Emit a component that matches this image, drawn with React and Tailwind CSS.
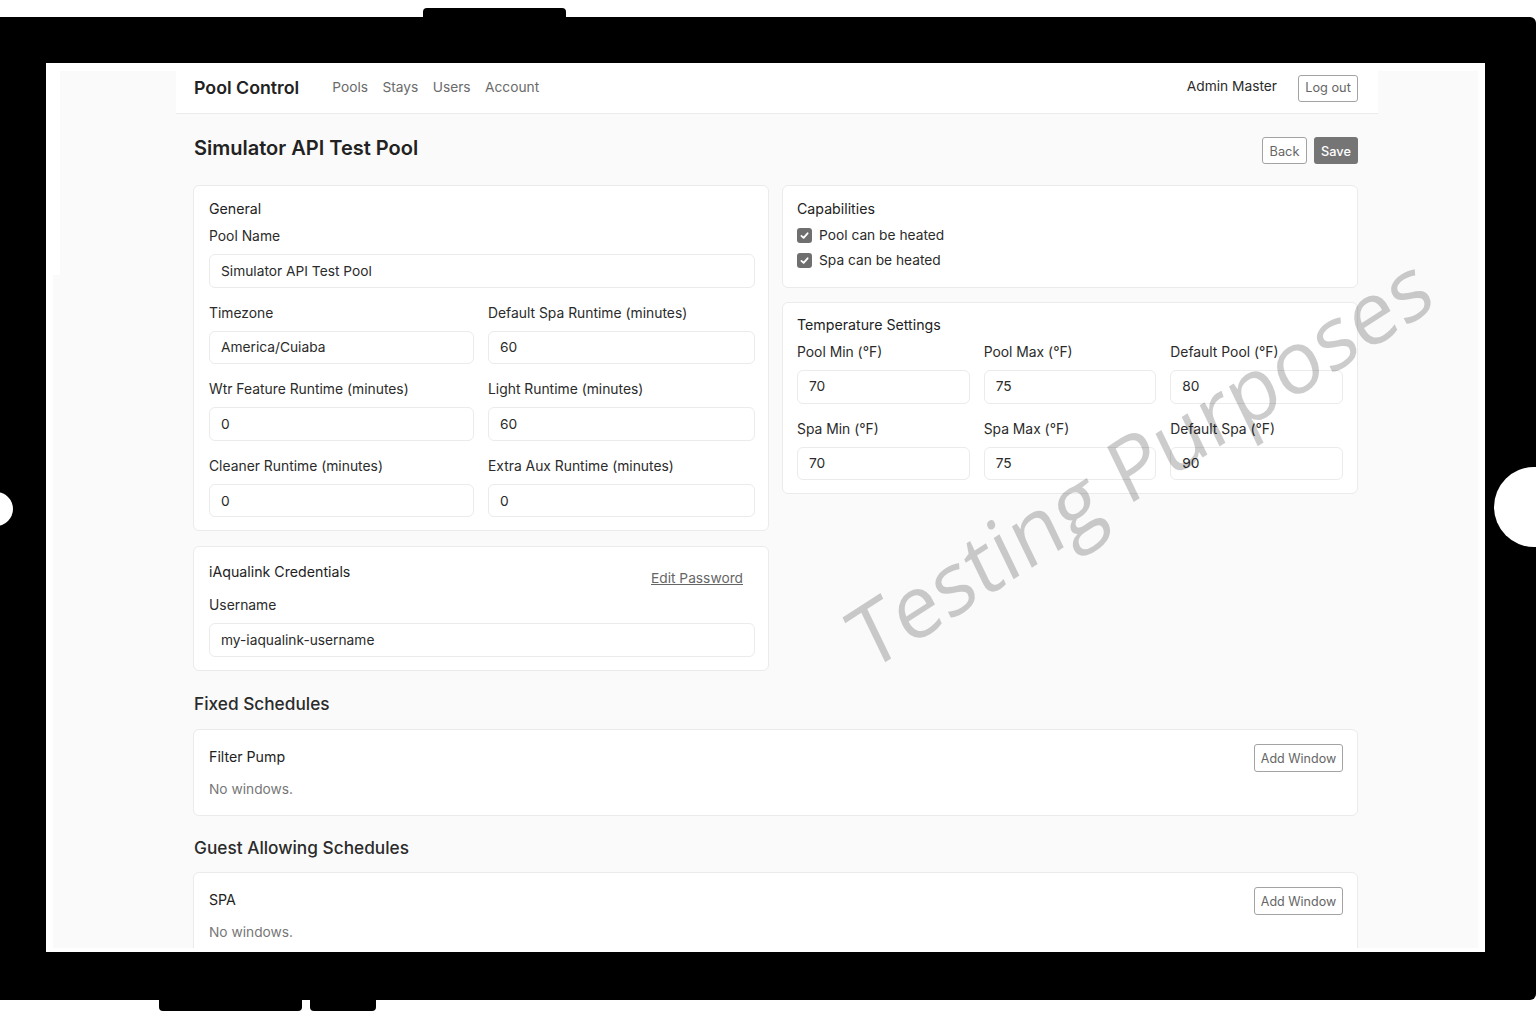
const font = { fontFamily: '"Inter", "Liberation Sans", sans-serif' };

function Label({ children }) {
  return <div className="h-[21px] text-[13.875px] leading-[22px] mb-2 text-[#2b2b2b]">{children}</div>;
}

function Field({ label, value, leading = "leading-[32px]" }) {
  return (
    <div>
      <Label>{label}</Label>
      <div className={"h-[33.5px] rounded-md border border-[#ebebeb] bg-white px-[11px] text-[13.75px] text-[#2b2b2b] " + leading}>{value}</div>
    </div>
  );
}

function Card({ children, className = "" }) {
  return <div className={"rounded-md border border-[#ebebeb] bg-white " + className}>{children}</div>;
}

function Btn({ children, className = "" }) {
  return (
    <div className={"flex items-center justify-center rounded-[3px] border border-[#a3a3a3] bg-white text-[#666666] " + className}>
      {children}
    </div>
  );
}

function CardTitle({ children, className = "" }) {
  return <div className={"-translate-y-px text-[14.2px] leading-[21px] text-[#222222] " + className}>{children}</div>;
}

function Check({ label }) {
  return (
    <div className="flex h-[25px] items-center gap-[7px] text-[13.75px] text-[#2b2b2b]">
      <span className="flex h-[15px] w-[15px] items-center justify-center rounded-[3px] bg-[#6f6f6f]">
        <svg width="11" height="11" viewBox="0 0 16 16" fill="none" stroke="#fff" strokeWidth="2.6" strokeLinecap="round" strokeLinejoin="round">
          <path d="M3.5 8.5 6.7 11.5 12.5 4.8" />
        </svg>
      </span>
      {label}
    </div>
  );
}

function ScheduleCard({ title, className = "" }) {
  return (
    <Card className={"h-[87px] pl-[15px] pr-[14px] pt-[14px] " + className}>
      <div className="flex items-start justify-between">
        <div className="pt-[2px] text-[14.2px] leading-[21px] text-[#222222]">{title}</div>
        <Btn className="h-[28px] w-[89px] pt-[2px] text-[12.5px]">Add Window</Btn>
      </div>
      <div className="mt-[7px] text-[13.75px] leading-[21px] text-[#777777]">No windows.</div>
    </Card>
  );
}

export default function App() {
  const tight = "leading-[31.5px]";
  return (
    <div style={font} className="relative h-[1024px] w-full overflow-hidden bg-white">
      <div className="ml-[423px] mt-2 h-[9px] w-[143px] rounded-t-[4px] bg-black" />
      <div className="h-[983px] rounded-r-[6px] bg-black px-[46px] pt-[46px]">
        <div className="relative h-[889px] w-[1439px] overflow-hidden bg-white">
          <div className="relative h-[885px] overflow-hidden">
            <div className="absolute bottom-0 left-[14px] right-[7px] top-2 bg-[#fafafa]" />
            <div className="absolute bottom-0 left-[7px] top-[212px] w-[7px] bg-[#fafafa]" />
            <div className="relative ml-[130px] w-[1202px]">
              <div className="flex h-[51px] items-center border-b border-[#ebebeb] bg-white pl-[18px] pr-[20px]">
                <div className="text-[17.75px] font-semibold text-[#222222]">Pool Control</div>
                <div className="ml-[33px] flex -translate-y-px gap-[14.4px] text-[13.75px] text-[#6b6b6b]">
                  <span>Pools</span><span>Stays</span><span>Users</span><span>Account</span>
                </div>
                <div className="ml-auto -translate-y-[2px] text-[13.75px] text-[#2b2b2b]">Admin Master</div>
                <Btn className="ml-[21px] h-[27px] w-[60px] text-[12.75px]">Log out</Btn>
              </div>
              <div className="pl-[17px] pr-[20px]">
                <div className="flex items-start justify-between pt-[23px]">
                  <div className="-mt-[1px] pl-px text-[20px] font-semibold leading-[24px] text-[#222222]">Simulator API Test Pool</div>
                  <div className="flex gap-[7px]">
                    <Btn className="h-[27px] w-[45px] pt-[2px] text-[12.75px]">Back</Btn>
                    <div className="flex h-[27px] w-[44px] items-center justify-center rounded-[3px] bg-[#757575] pt-[2px] text-[12.75px] font-medium text-white">Save</div>
                  </div>
                </div>
                <div className="mt-[21px] grid grid-cols-2 gap-x-[13px]">
                  <div className="flex flex-col gap-[15px]">
                    <Card className="h-[346px] pl-[15px] pr-[13px] pt-[13px]">
                      <CardTitle className="mb-[5px]">General</CardTitle>
                      <Field label="Pool Name" value="Simulator API Test Pool" />
                      <div className="mt-[14px] grid grid-cols-[265px_1fr] gap-x-[14px] gap-y-[14px]">
                        <Field label="Timezone" value="America/Cuiaba" leading={tight} />
                        <Field label="Default Spa Runtime (minutes)" value="60" leading={tight} />
                        <Field label="Wtr Feature Runtime (minutes)" value="0" />
                        <Field label="Light Runtime (minutes)" value="60" />
                        <Field label="Cleaner Runtime (minutes)" value="0" />
                        <Field label="Extra Aux Runtime (minutes)" value="0" />
                      </div>
                    </Card>
                    <Card className="h-[125px] pl-[15px] pr-[13px] pt-[15px]">
                      <div className="flex items-start justify-between pr-[12px]">
                        <CardTitle>iAqualink Credentials</CardTitle>
                        <div className="mt-[6px] text-[13.75px] leading-[21px] text-[#666666] underline">Edit Password</div>
                      </div>
                      <div className="mt-[5px]">
                        <Field label="Username" value="my-iaqualink-username" />
                      </div>
                    </Card>
                  </div>
                  <div className="flex flex-col items-stretch gap-[14px]">
                    <Card className="h-[103px] px-[14px] pt-[13px]">
                      <CardTitle className="mb-[3px]">Capabilities</CardTitle>
                      <Check label="Pool can be heated" />
                      <Check label="Spa can be heated" />
                    </Card>
                    <Card className="h-[192px] px-[14px] pt-[12px]">
                      <CardTitle className="mb-[5px]">Temperature Settings</CardTitle>
                      <div className="grid grid-cols-3 gap-x-[14px] gap-y-[14px]">
                        <Field label="Pool Min (°F)" value="70" leading={tight} />
                        <Field label="Pool Max (°F)" value="75" leading={tight} />
                        <Field label="Default Pool (°F)" value="80" leading={tight} />
                        <Field label="Spa Min (°F)" value="70" leading={tight} />
                        <Field label="Spa Max (°F)" value="75" leading={tight} />
                        <Field label="Default Spa (°F)" value="90" leading={tight} />
                      </div>
                    </Card>
                  </div>
                </div>
                <h2 className="mt-[19px] pl-px text-[17.25px] font-medium leading-[27px] text-[#2b2b2b]">Fixed Schedules</h2>
                <ScheduleCard title="Filter Pump" className="mt-[12px]" />
                <h2 className="mt-[18px] pl-px text-[17.25px] font-medium leading-[27px] text-[#2b2b2b]">Guest Allowing Schedules</h2>
                <ScheduleCard title="SPA" className="mt-[11px]" />
              </div>
            </div>
          </div>
          <div
            style={{ fontFamily: '"Open Sans", sans-serif' }}
            className="pointer-events-none absolute left-[827px] top-[534px] origin-bottom-left -rotate-[32.8deg] -skew-x-[7deg] whitespace-nowrap text-[85px] font-medium leading-none text-black/20"
          >
            Testing Purposes
          </div>
        </div>
      </div>
      <div className="flex pl-[159px]">
        <div className="h-[11px] w-[143px] rounded-b-[4px] bg-black" />
        <div className="ml-2 h-[11px] w-[66px] rounded-b-[4px] bg-black" />
      </div>
      <div className="absolute -left-[21px] top-[492px] h-[34px] w-[34px] rounded-full bg-white" />
      <div className="absolute left-[1494px] top-[467px] h-20 w-20 rounded-full bg-white" />
    </div>
  );
}
